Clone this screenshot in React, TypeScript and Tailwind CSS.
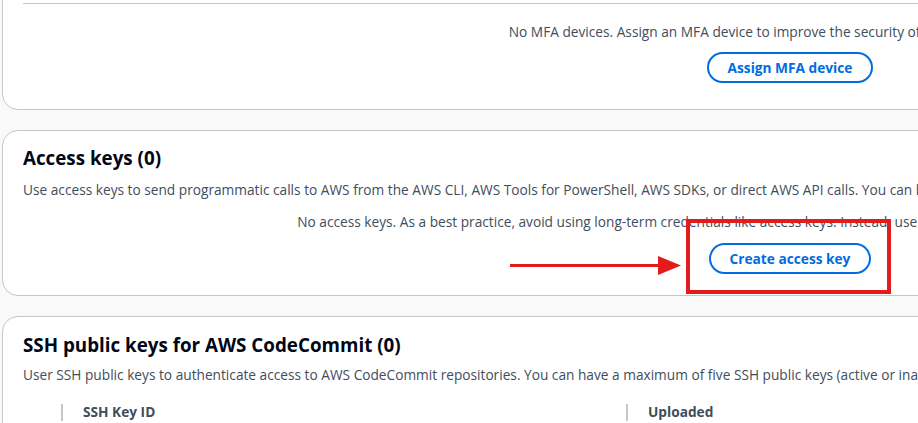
import React from "react";

const font = { fontFamily: '"Open Sans", "Noto Sans", Arial, sans-serif' };

function PillButton({ label }: { label: string }) {
  return (
    <button className="h-[31px] rounded-full border-2 border-[#006ce0] bg-white px-[19px] text-[13.7px] font-bold leading-[20px] text-[#006ce0]">
      {label}
    </button>
  );
}

export default function App() {
  return (
    <div
      className="relative h-[423px] w-[918px] overflow-hidden bg-[#f9f9f9]"
      style={font}
    >
      <div className="flex w-[1580px] flex-col gap-[20px] pl-[2px] -mt-[20px]">
        {/* MFA card */}
        <div className="w-[1576px] rounded-[16px] border border-[#c6c6cd] bg-white px-[20px] pb-[26px]">
          <div className="h-[23px] border-b border-[#c6c6cd]" />
          <div className="mt-[18px] flex flex-col items-center">
            <p className="text-[13.7px] leading-[20px] text-[#414d5c]">
              No MFA devices. Assign an MFA device to improve the security of your AWS environment
            </p>
            <div className="mt-[10px] flex">
              <PillButton label="Assign MFA device" />
            </div>
          </div>
        </div>

        {/* Access keys card */}
        <div className="w-[1576px] rounded-[16px] border border-[#c6c6cd] bg-white px-[20px] pt-[16px] pb-[21px]">
          <h2 className="text-[18.8px] font-bold leading-[22px] text-[#000716]">Access keys (0)</h2>
          <p className="mt-[11px] text-[13.7px] leading-[20px] text-[#414d5c]">
            Use access keys to send programmatic calls to AWS from the AWS CLI, AWS Tools for PowerShell, AWS SDKs, or direct AWS API calls. You can have a maximum of two access keys (active or inactive) at a time.
          </p>
          <div className="mt-[12px] flex flex-col items-center">
            <p className="flex items-center text-[13.7px] leading-[20px] text-[#414d5c]">
              No access keys. As a best practice, avoid using long-term credentials like access keys. Instead, use tools which provide short term credentials.&nbsp;
              <span className="text-[#006ce0] underline">Learn more</span>
              <svg className="ml-[1px]" width="10" height="10" viewBox="0 0 16 16" fill="none" stroke="#006ce0" strokeWidth="2">
                <path d="M10 2h4v4M14 2 8 8M12 9v5H2V4h5" />
              </svg>
            </p>
            <div className="mt-[11px] flex">
              <PillButton label="Create access key" />
            </div>
          </div>
        </div>

        {/* SSH card */}
        <div className="w-[1576px] rounded-[16px] border border-[#c6c6cd] bg-white px-[20px] pt-[17px] pb-[20px]">
          <h2 className="text-[18.8px] font-bold leading-[22px] text-[#000716]">
            SSH public keys for AWS CodeCommit (0)
          </h2>
          <p className="mt-[9px] text-[13.7px] leading-[20px] text-[#414d5c]">
            User SSH public keys to authenticate access to AWS CodeCommit repositories. You can have a maximum of five SSH public keys (active or inactive) at a time.
          </p>
          <div className="mt-[17px] flex pl-[38px] text-[13.7px] font-bold leading-[20px] text-[#414d5c]">
            <div className="flex w-[565px] items-center">
              <span className="h-[17px] w-[2px] bg-[#c6c6cd]" />
              <span className="pl-[20px]">SSH Key ID</span>
            </div>
            <div className="flex items-center">
              <span className="h-[17px] w-[2px] bg-[#c6c6cd]" />
              <span className="pl-[20px]">Uploaded</span>
            </div>
          </div>
        </div>
      </div>

      {/* Annotation overlay */}
      <div className="absolute left-[686px] top-[219px] h-[75px] w-[205px] border-[4px] border-[#e31b1b]" />
      <div className="absolute left-[510px] top-[264px] h-[3px] w-[152px] bg-[#e31b1b]" />
      <svg className="absolute left-[658px] top-[256px]" width="24" height="19" viewBox="0 0 24 19">
        <polygon points="0,0 23,9.5 0,19" fill="#e31b1b" />
      </svg>
    </div>
  );
}
